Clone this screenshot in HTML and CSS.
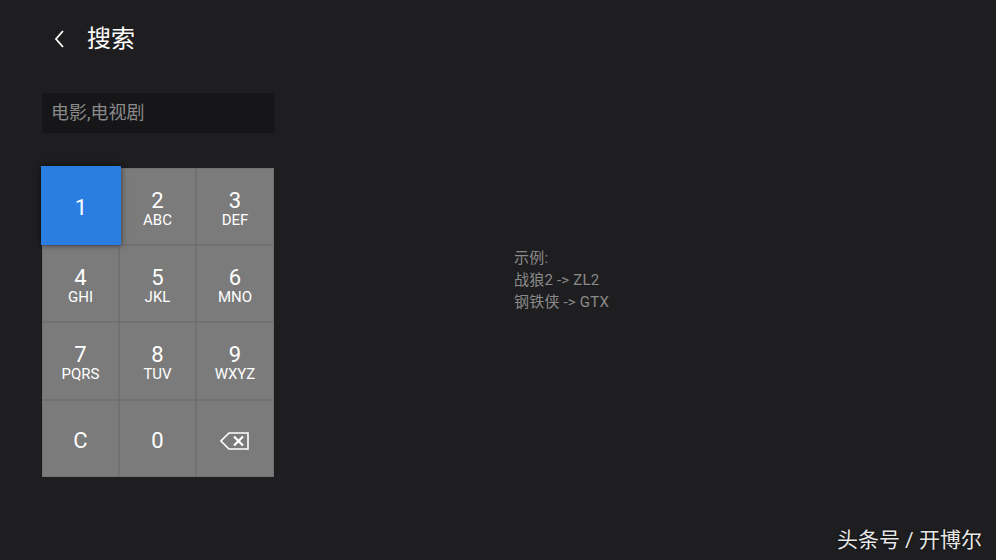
FILE: index.html
```html
<!DOCTYPE html>
<html lang="zh">
<head>
<meta charset="utf-8">
<link rel="stylesheet" href="styles.css">
</head>
<body>
<div class="screen">
  <div class="left">
    <header class="header">
      <svg class="back" width="14" height="20" viewBox="0 0 14 20"><path d="M10 2 L3 10 L10 18" fill="none" stroke="#fff" stroke-width="1.8"/></svg>
      <h1 class="title">搜索</h1>
    </header>
    <div class="search">电影,电视剧</div>
    <div class="keypad">
      <div class="key active"><span class="num">1</span></div>
      <div class="key"><span class="num">2</span><span class="let">ABC</span></div>
      <div class="key"><span class="num">3</span><span class="let">DEF</span></div>
      <div class="key"><span class="num">4</span><span class="let">GHI</span></div>
      <div class="key"><span class="num">5</span><span class="let">JKL</span></div>
      <div class="key"><span class="num">6</span><span class="let">MNO</span></div>
      <div class="key"><span class="num">7</span><span class="let">PQRS</span></div>
      <div class="key"><span class="num">8</span><span class="let">TUV</span></div>
      <div class="key"><span class="num">9</span><span class="let">WXYZ</span></div>
      <div class="key"><span class="num">C</span></div>
      <div class="key"><span class="num">0</span></div>
      <div class="key"><svg width="30" height="20" viewBox="0 0 30 20"><path d="M9 2 H28 V18 H9 L1 10 Z" fill="none" stroke="#fff" stroke-width="1.6" stroke-linejoin="miter"/><path d="M14 5.5 L23 14.5 M23 5.5 L14 14.5" stroke="#fff" stroke-width="2.2"/></svg></div>
    </div>
  </div>
  <div class="hint">
    <p>示例:</p>
    <p>战狼2 -&gt; ZL2</p>
    <p>钢铁侠 -&gt; GTX</p>
  </div>
  <div class="mark">头条号 / 开博尔</div>
</div>
</body>
</html>
```
FILE: styles.css
```css
html, body {
  margin: 0;
  padding: 0;
  background: #1e1e20;
}
body {
  font-family: Roboto, "Noto Sans CJK SC", "Noto Sans", sans-serif;
  color: #fff;
}
.screen {
  position: relative;
  width: 996px;
  height: 560px;
  overflow: hidden;
  display: flex;
}
.left {
  padding: 20px 0 0 42px;
  width: 233px;
}
.header {
  display: flex;
  align-items: center;
  height: 38px;
  margin-left: 11px;
}
.back {
  display: block;
}
.title {
  margin: 0 0 0 20px;
  font-size: 24px;
  font-weight: 400;
  line-height: 38px;
}
.search {
  margin-top: 35px;
  height: 40px;
  box-sizing: border-box;
  width: 233px;
  background: #161618;
  color: #8a8a8a;
  font-size: 18px;
  line-height: 40px;
  padding-left: 9px;
}
.keypad {
  margin-top: 35px;
  width: 232px;
  display: grid;
  grid-template-columns: 77px 77px 78px;
  grid-template-rows: 77px 77px 78px 77px;
  background: #6c6c6c;
  gap: 0;
}
.key {
  background: #7b7b7b;
  box-shadow: inset 0 0 0 0.5px #686868;
  display: flex;
  flex-direction: column;
  align-items: center;
  justify-content: center;
  position: relative;
  padding-top: 5px;
}
.key .num {
  font-size: 22px;
  line-height: 22px;
}
.key .let {
  font-size: 15px;
  line-height: 17px;
}
.key.active {
  background: #2a7de1;
  box-shadow: 0 0 6px rgba(0,0,0,0.6);
  margin: -2px -2px 0 -1px;
  z-index: 1;
}
.hint {
  margin: 247px 0 0 239px;
  color: #8a8a8a;
  font-size: 15px;
  line-height: 22px;
  letter-spacing: 0.2px;
}
.hint p {
  margin: 0;
}
.mark {
  position: absolute;
  right: 14px;
  bottom: 7px;
  font-size: 21px;
  color: #e8e8e8;
  text-shadow: 0 0 2px #000;
}
```
